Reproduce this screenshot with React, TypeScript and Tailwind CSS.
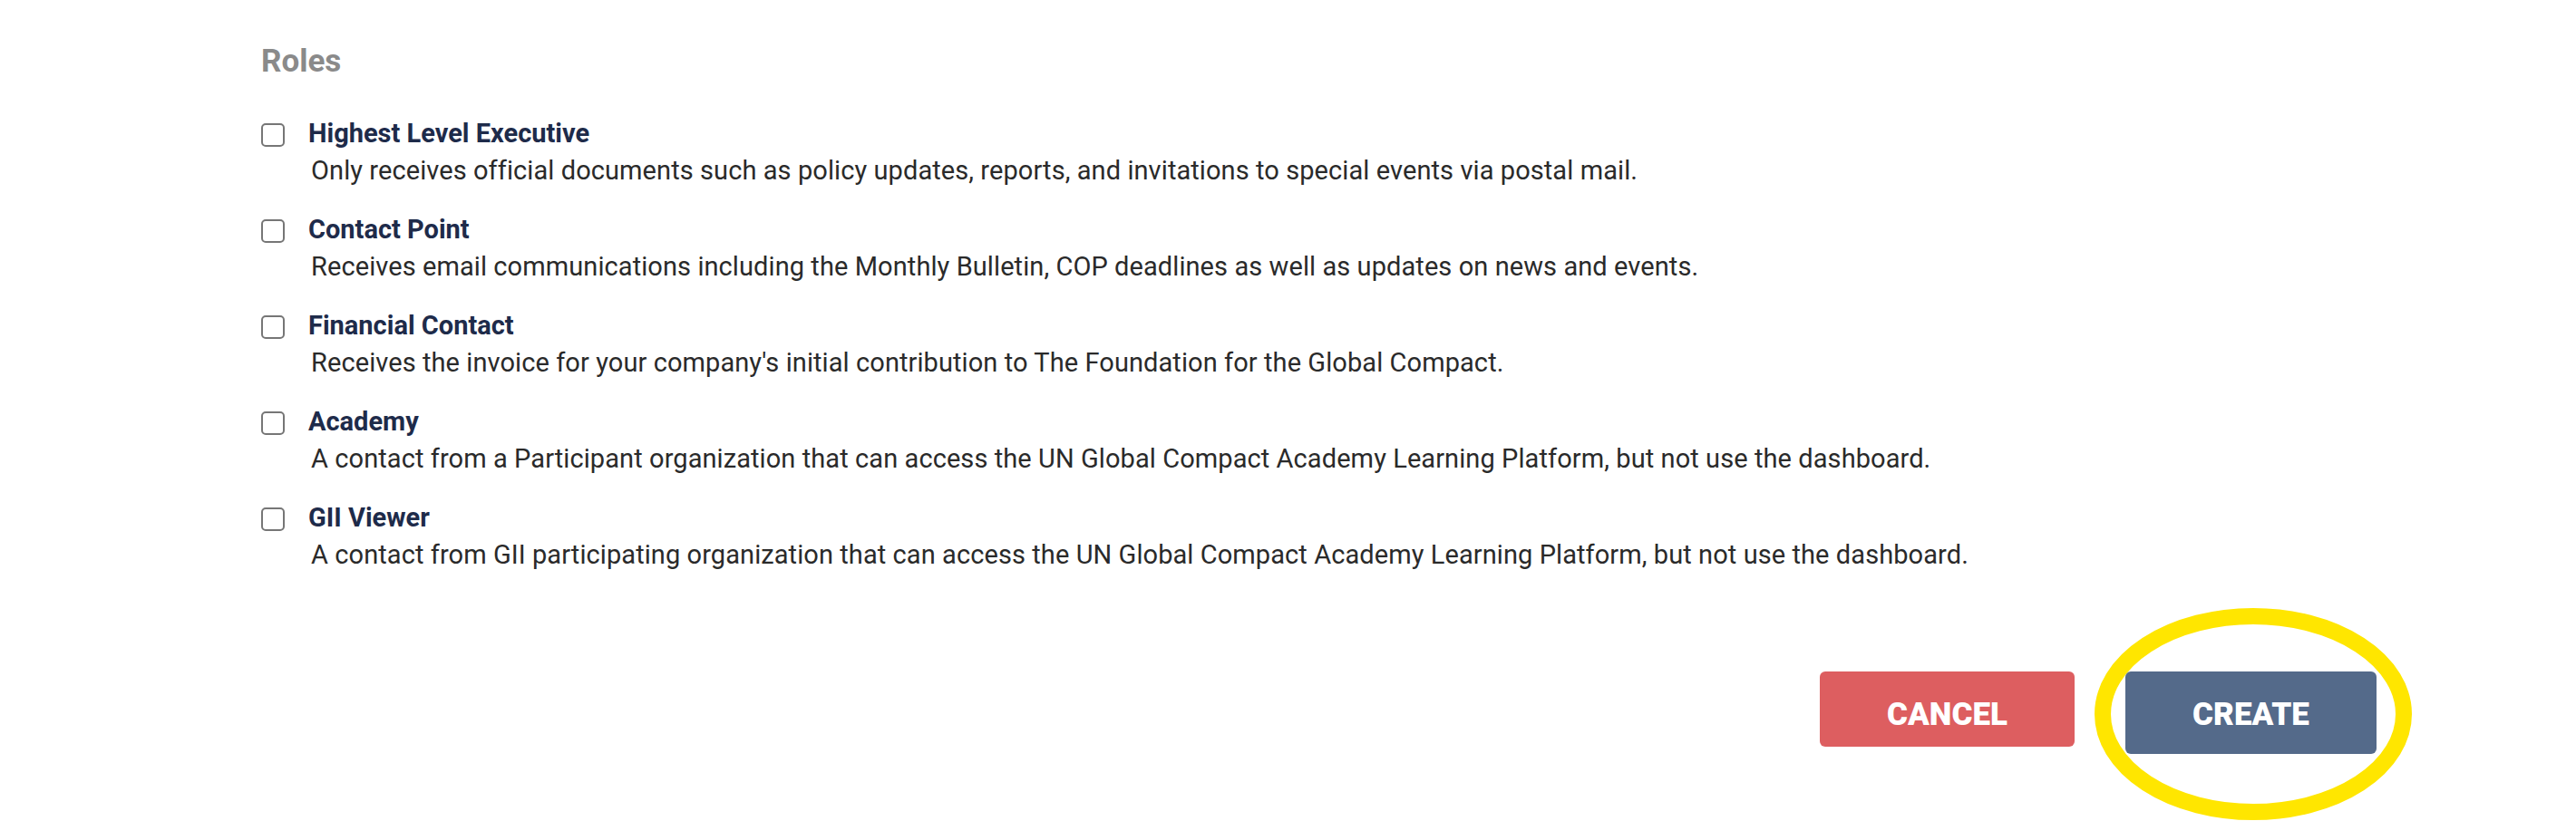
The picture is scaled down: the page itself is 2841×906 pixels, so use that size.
import React from "react";

const roles = [
  {
    title: "Highest Level Executive",
    desc: "Only receives official documents such as policy updates, reports, and invitations to special events via postal mail.",
  },
  {
    title: "Contact Point",
    desc: "Receives email communications including the Monthly Bulletin, COP deadlines as well as updates on news and events.",
  },
  {
    title: "Financial Contact",
    desc: "Receives the invoice for your company's initial contribution to The Foundation for the Global Compact.",
  },
  {
    title: "Academy",
    desc: "A contact from a Participant organization that can access the UN Global Compact Academy Learning Platform, but not use the dashboard.",
  },
  {
    title: "GII Viewer",
    desc: "A contact from GII participating organization that can access the UN Global Compact Academy Learning Platform, but not use the dashboard.",
  },
];

export default function App() {
  return (
    <div
      className="relative w-[2841px] h-[906px] overflow-hidden bg-white"
      style={{ fontFamily: "Roboto, 'Open Sans', sans-serif" }}
    >
      <div className="pl-[288px] pt-[48px] pr-[220px] flex flex-col">
        <h2 className="h-[40px] text-[35px] leading-[40px] font-bold text-[#8a8a8a]">Roles</h2>
        <div className="mt-[39px] flex flex-col gap-[25px]">
          {roles.map((r) => (
            <div key={r.title} className="h-[81px] flex items-start gap-[26px]">
              <span className="mt-[9px] w-[26px] h-[26px] shrink-0 rounded-[5px] border-2 border-[#767676] bg-white" />
              <div className="flex flex-col">
                <span className="h-[40px] text-[29px] leading-[40px] font-bold text-[#1e2b4a]">{r.title}</span>
                <span className="mt-[1px] h-[40px] text-[29px] leading-[40px] text-[#2a2a2a] ml-[3px] tracking-[0.08px]">{r.desc}</span>
              </div>
            </div>
          ))}
        </div>
        <div className="mt-[109px] flex justify-end items-start gap-[56px]">
          <button className="w-[281px] h-[83px] pt-[28px] rounded-[6px] bg-[#dd5e60] text-white text-[35px] leading-[40px] font-black flex justify-center items-start">
            CANCEL
          </button>
          <button className="w-[277px] h-[91px] pt-[28px] rounded-[6px] bg-[#546a8a] text-white text-[35px] leading-[40px] font-black flex justify-center items-start">
            CREATE
          </button>
        </div>
      </div>
      <svg
        className="absolute left-[2310px] top-[671px] pointer-events-none"
        width="350"
        height="236"
        viewBox="0 0 350 236"
      >
        <ellipse cx="175" cy="117" rx="166" ry="108" fill="none" stroke="#ffe600" strokeWidth="18" />
      </svg>
    </div>
  );
}
